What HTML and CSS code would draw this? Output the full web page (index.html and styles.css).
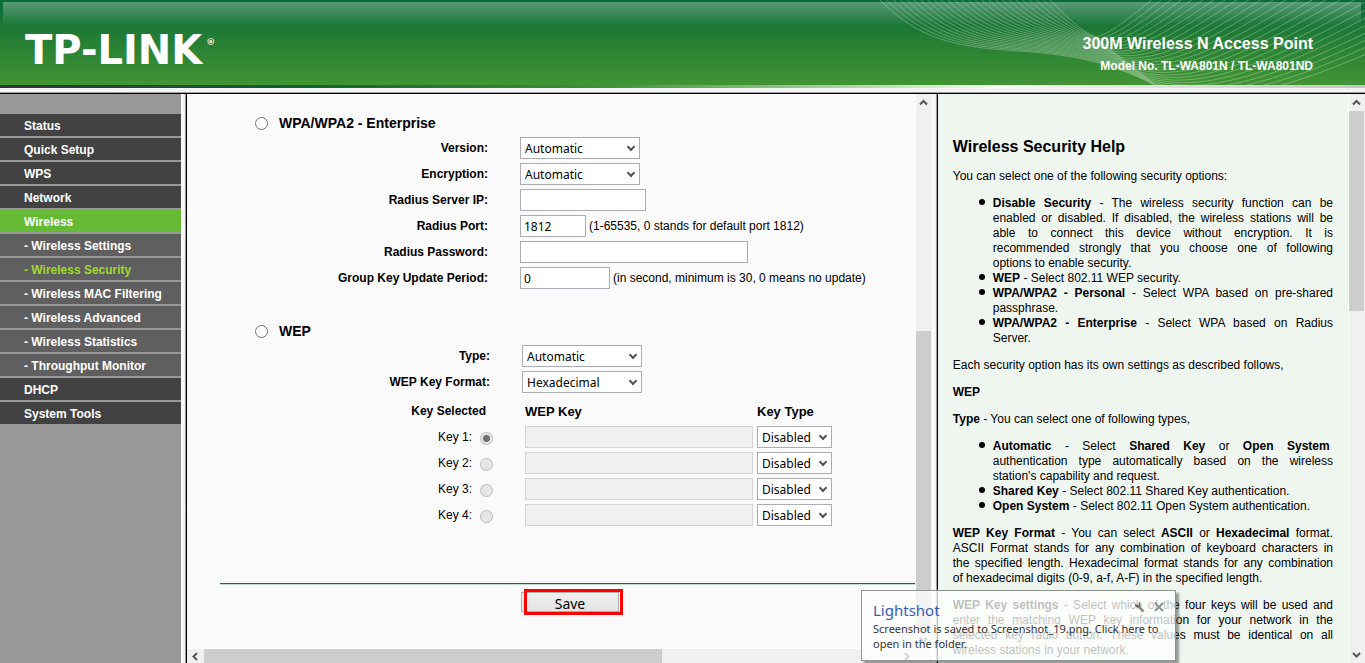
FILE: index.html
```html
<!DOCTYPE html>
<html lang="en">
<head>
  <meta charset="UTF-8" />
  <meta name="viewport" content="width=device-width, initial-scale=1.0"/>
  <title>TL-WA801N / TL-WA801ND</title>
  <link rel="stylesheet" href="styles.css">
</head>
<body>

  <header class="banner">
    <svg class="waves" id="waves" width="500" height="85" viewBox="865 0 500 85" aria-hidden="true"></svg>
    <div class="logo">TP-LINK<sup>®</sup></div>
    <div class="product">
      <h1>300M Wireless N Access Point</h1>
      <p>Model No. TL-WA801N / TL-WA801ND</p>
    </div>
  </header>
  <div class="banner-strip"></div>

  <div class="frames">
    <nav class="menu">
      <a href="#">Status</a>
      <a href="#">Quick Setup</a>
      <a href="#">WPS</a>
      <a href="#">Network</a>
      <a href="#" class="active">Wireless</a>
      <a href="#" class="sub">- Wireless Settings</a>
      <a href="#" class="sub current">- Wireless Security</a>
      <a href="#" class="sub">- Wireless MAC Filtering</a>
      <a href="#" class="sub">- Wireless Advanced</a>
      <a href="#" class="sub">- Wireless Statistics</a>
      <a href="#" class="sub">- Throughput Monitor</a>
      <a href="#">DHCP</a>
      <a href="#">System Tools</a>
    </nav>
    <div class="divider"></div>

    <main class="content">
      <div class="content-row">
        <form class="settings" onsubmit="return false">
          <section class="group">
            <h2 class="group-title">
              <input type="radio" name="security" id="enterprise">
              <label for="enterprise">WPA/WPA2 - Enterprise</label>
            </h2>
            <div class="row">
              <label for="version">Version:</label>
              <span class="drop"><select id="version" class="medium"><option>Automatic</option></select></span>
            </div>
            <div class="row">
              <label for="encryption">Encryption:</label>
              <span class="drop"><select id="encryption" class="medium"><option>Automatic</option></select></span>
            </div>
            <div class="row">
              <label for="radiusIp">Radius Server IP:</label>
              <input type="text" id="radiusIp" class="ip">
            </div>
            <div class="row">
              <label for="radiusPort">Radius Port:</label>
              <input type="text" id="radiusPort" class="port" value="1812">
              <span class="hint">(1-65535, 0 stands for default port 1812)</span>
            </div>
            <div class="row">
              <label for="radiusPwd">Radius Password:</label>
              <input type="password" id="radiusPwd" class="wide">
            </div>
            <div class="row">
              <label for="period">Group Key Update Period:</label>
              <input type="text" id="period" class="period" value="0">
              <span class="hint">(in second, minimum is 30, 0 means no update)</span>
            </div>
          </section>

          <section class="group wep">
            <h2 class="group-title">
              <input type="radio" name="security" id="wep">
              <label for="wep">WEP</label>
            </h2>
            <div class="row">
              <label for="type">Type:</label>
              <span class="drop"><select id="type" class="medium"><option>Automatic</option></select></span>
            </div>
            <div class="row">
              <label for="format">WEP Key Format:</label>
              <span class="drop"><select id="format" class="medium"><option>Hexadecimal</option></select></span>
            </div>

            <table class="keys">
              <tr>
                <th class="key-name">Key Selected</th>
                <th>WEP Key</th>
                <th>Key Type</th>
              </tr>
              <tr>
                <td class="key-name"><label for="key1">Key 1:</label><input type="radio" name="key" id="key1" checked disabled></td>
                <td><input type="text" class="wide" aria-label="WEP Key 1" disabled></td>
                <td><span class="drop"><select class="small" aria-label="Key Type 1"><option>Disabled</option></select></span></td>
              </tr>
              <tr>
                <td class="key-name"><label for="key2">Key 2:</label><input type="radio" name="key" id="key2" disabled></td>
                <td><input type="text" class="wide" aria-label="WEP Key 2" disabled></td>
                <td><span class="drop"><select class="small" aria-label="Key Type 2"><option>Disabled</option></select></span></td>
              </tr>
              <tr>
                <td class="key-name"><label for="key3">Key 3:</label><input type="radio" name="key" id="key3" disabled></td>
                <td><input type="text" class="wide" aria-label="WEP Key 3" disabled></td>
                <td><span class="drop"><select class="small" aria-label="Key Type 3"><option>Disabled</option></select></span></td>
              </tr>
              <tr>
                <td class="key-name"><label for="key4">Key 4:</label><input type="radio" name="key" id="key4" disabled></td>
                <td><input type="text" class="wide" aria-label="WEP Key 4" disabled></td>
                <td><span class="drop"><select class="small" aria-label="Key Type 4"><option>Disabled</option></select></span></td>
              </tr>
            </table>
          </section>

          <div class="actions">
            <button type="submit">Save</button>
          </div>
        </form>

        <div class="scroll main-scroll">
          <svg class="arrow" viewBox="0 0 15 17"><path d="M4 10.500 7.500 7l3.500 3.500"/></svg>
          <div class="track"><div class="thumb"></div></div>
          <svg class="arrow" viewBox="0 0 15 17"><path d="M4 7l3.500 3.500L11 7"/></svg>
        </div>
      </div>

      <div class="scroll-x">
        <svg class="arrow" viewBox="0 0 17 14"><path d="M10 4 6.500 7.500 10 11"/></svg>
        <div class="track"><div class="thumb"></div></div>
        <svg class="arrow" viewBox="0 0 17 14"><path d="M7 4l3.500 3.500L7 11"/></svg>
        <div class="corner"></div>
      </div>
    </main>
    <div class="divider"></div>

    <aside class="help">
      <div class="help-text">
        <h2>Wireless Security Help</h2>
        <p>You can select one of the following security options:</p>
        <ul>
          <li><b>Disable Security</b> - The wireless security function can be enabled or disabled. If disabled, the wireless stations will be able to connect this device without encryption. It is recommended strongly that you choose one of following options&nbsp;to enable security.</li>
          <li><b>WEP</b> - Select 802.11 WEP security.</li>
          <li><b>WPA/WPA2 - Personal</b> - Select WPA based on pre-shared passphrase.</li>
          <li><b>WPA/WPA2 - Enterprise</b> - Select WPA based on Radius Server.</li>
        </ul>
        <p>Each security option has its own settings as described follows,</p>
        <p><b>WEP</b></p>
        <p><b>Type</b> - You can select one of following types,</p>
        <ul>
          <li><b>Automatic</b> - Select <b>Shared Key</b> or <b>Open System</b>&nbsp; authentication type automatically based on the wireless station's capability and request.</li>
          <li><b>Shared Key</b> - Select 802.11 Shared Key authentication.</li>
          <li><b>Open System</b> - Select 802.11 Open System authentication.</li>
        </ul>
        <p><b>WEP Key Format</b> - You can select <b>ASCII</b> or <b>Hexadecimal</b> format. ASCII Format stands for any combination of keyboard characters in the&nbsp;specified length. Hexadecimal format stands for any combination of&nbsp;hexadecimal digits (0-9, a-f, A-F) in the specified length.</p>
        <p><b>WEP Key settings</b> - Select which of the four keys will be used and enter the matching WEP key information for your network in the selected key radio button. These values must be identical on all wireless stations in your network.</p>
      </div>
      <div class="scroll help-scroll">
        <svg class="arrow" viewBox="0 0 15 17"><path d="M4 10.500 7.500 7l3.500 3.500"/></svg>
        <div class="track"><div class="thumb"></div></div>
        <svg class="arrow" viewBox="0 0 15 17"><path d="M4 7l3.500 3.500L11 7"/></svg>
      </div>
    </aside>
  </div>

  <!-- Tray notification -->
  <div class="toast">
    <div class="toast-head">
      <h3>Lightshot</h3>
      <button type="button" aria-label="Settings">
        <svg width="10" height="11" viewBox="0 0 10 11"><path d="M3 4l5.500 5.500" stroke="#8a8e8a" stroke-width="2.500"/><path d="M0 1.500v2.500l2.500 2 3-1.500V2L4 0v2.500L2.500 3z" fill="#6c6c74"/></svg>
      </button>
      <button type="button" aria-label="Close">
        <svg width="10" height="10" viewBox="0 0 10 10"><path d="M1 1l8 8M9 1L1 9" stroke="#8a938a" stroke-width="2"/></svg>
      </button>
    </div>
    <p>Screenshot is saved to Screenshot_19.png. Click here to open in the folder.</p>
  </div>

  <script>
    // Fan of thin lines behind the product name
    const low = [880, 0, 960, 82, 1040, 22, 1160, 88, 1230, 110, 1300, 85, 1420, 30];
    const high = [1050, 0, 1068, 18, 1082, 32, 1096, 37, 1120, 30, 1140, 8, 1260, -90];
    const count = 26;
    let lines = '';

    for (let i = 0; i < count; i++) {
      const t = i / (count - 1);
      const p = low.map((v, n) => (v + (high[n] - v) * t).toFixed(1));
      lines += `<path d="M${p[0]} ${p[1]}C${p.slice(2).join(' ')}"/>`;
    }

    document.getElementById('waves').innerHTML = lines;
  </script>

</body>
</html>
```
FILE: styles.css
```css
* { box-sizing: border-box; }

body {
  margin: 0;
  height: 100vh;
  display: flex;
  flex-direction: column;
  overflow: hidden;
  position: relative;
  font-family: Arial, "Liberation Sans", sans-serif;
  font-size: 12px;
  line-height: 15px;
  color: #000;
  background: #fafafa;
}

h1, h2, h3, p { margin: 0; }

/* Banner */
.banner {
  position: relative;
  flex: none;
  height: 85px;
  display: flex;
  justify-content: space-between;
  padding: 0 52px 0 25px;
  color: #fff;
  background: linear-gradient(#086b37 0, #1b7735 26px, #429533 85px);
}

.banner::before {
  content: "";
  position: absolute;
  left: 3px;
  right: 4px;
  top: 2px;
  height: 24px;
  background: linear-gradient(rgba(255,255,255,0.32), rgba(255,255,255,0));
}

.waves {
  position: absolute;
  right: 0;
  top: 0;
  fill: none;
  stroke: #fff;
  stroke-opacity: 0.28;
}

.logo {
  position: relative;
  display: flex;
  gap: 4px;
  padding-top: 30px;
  font: bold 40px/40px "DejaVu Sans", sans-serif;
}

.logo sup {
  font-size: 9px;
  line-height: 24px;
}

.product {
  position: relative;
  padding-top: 34px;
  text-align: right;
  font-weight: bold;
}

.product h1 {
  font-size: 16px;
  line-height: 20px;
}

.product p {
  margin-top: 4px;
  line-height: 16px;
}

.banner-strip {
  flex: none;
  height: 9px;
  background:
    linear-gradient(90deg, #333 0, #106038 22%, #3f9436 45%, #f4fbf0 73%, #c4c4c4 100%) top / 100% 3px no-repeat,
    linear-gradient(#f4f4f4 7px, #a0a0a0 7px, #a0a0a0 8px, #000 8px);
}

/* Frames */
.frames {
  flex: 1;
  display: flex;
  min-height: 0;
}

.divider {
  flex: none;
  width: 6px;
  background: linear-gradient(90deg, #fff 0, #f0f0f0 4px, #a0a0a0 4px, #a0a0a0 5px, #000 5px);
}

/* Menu */
.menu {
  flex: none;
  width: 181px;
  padding-top: 20px;
  background: #989898;
}

.menu a {
  display: block;
  height: 22px;
  margin-bottom: 2px;
  padding-left: 24px;
  font-weight: bold;
  line-height: 24px;
  color: #fff;
  text-decoration: none;
  background: #424242;
}

.menu .active { background: #65ba33; }
.menu .sub { background: #5f5f5f; }
.menu .current { color: #a2d82e; }

/* Settings */
.content {
  flex: 1;
  display: flex;
  flex-direction: column;
  min-width: 0;
}

.content-row {
  flex: 1;
  display: flex;
  min-height: 0;
}

.settings {
  flex: 1;
  min-width: 0;
  padding-top: 19px;
  overflow: hidden;
}

.group { margin-bottom: 30px; }

.group-title {
  display: flex;
  align-items: center;
  gap: 11px;
  height: 22px;
  padding: 0 0 2px 68px;
  font-size: 14px;
  line-height: 20px;
}

.group-title input { margin-top: 7px; }

.row {
  display: flex;
  align-items: center;
  height: 26px;
}

.row label {
  width: 301px;
  margin-right: 32px;
  text-align: right;
  font-weight: bold;
}

.wep .row label { width: 303px; }

.hint { margin-left: 3px; }

input[type="text"],
input[type="password"],
select {
  display: block;
  height: 22px;
  margin: 0;
  padding: 0 4px;
  border: 1px solid #abadb3;
  border-radius: 0;
  font: 12px "Noto Sans", sans-serif;
  color: #000;
  background: #fff;
}

input[type="text"] { padding: 0 3px; }

input[type="text"]:disabled {
  border-color: #d5d5d5;
  background: #f0f0f0;
}

select {
  appearance: none;
  width: 100%;
}

.drop {
  position: relative;
  display: inline-block;
  vertical-align: top;
}

.drop::after {
  content: "";
  position: absolute;
  right: 6px;
  top: 7px;
  width: 4px;
  height: 4px;
  border: solid #555;
  border-width: 0 2px 2px 0;
  transform: rotate(45deg);
  pointer-events: none;
}

.medium { min-width: 120px; }
.small { min-width: 75px; }
.ip { width: 126px; }
.port { width: 66px; }
.period { width: 90px; }
.wide { width: 228px; }

input[type="radio"] {
  appearance: none;
  flex: none;
  width: 13px;
  height: 13px;
  margin: 0;
  border: 1px solid #707070;
  border-radius: 50%;
  background: #fff;
}

input[type="radio"]:disabled {
  border-color: #bcbcbc;
  background: #e6e6e6;
}

input[type="radio"]:checked {
  background: radial-gradient(circle, #707070 3px, #e6e6e6 4px);
}

.keys {
  border-collapse: collapse;
}

.keys th {
  height: 29px;
  padding: 4px 0 0;
  text-align: left;
  font-size: 13px;
}

.keys td {
  height: 26px;
  padding: 0 4px 0 0;
}

.keys .key-name {
  width: 338px;
  padding-right: 32px;
  text-align: right;
}

.keys th.key-name {
  padding-right: 39px;
  font-size: 12px;
}

.keys label { margin-right: 8px; }
.keys input[type="radio"] { vertical-align: -4px; }

.wep { margin-bottom: 0; }

.actions {
  margin: 55px 0 0 33px;
  padding: 8px 0 0 301px;
  border-top: 1px solid #18703c;
  box-shadow: inset 0 1px #c5dccd;
}

.actions button {
  position: relative;
  display: block;
  width: 98px;
  height: 20px;
  padding: 2px 0 0;
  border: 1px solid #acacac;
  font: 14px/18px "Noto Sans", sans-serif;
  background: linear-gradient(#f0f0f0, #e3e3e3);
}

.actions button::after {
  content: "";
  position: absolute;
  left: 2px;
  right: -5px;
  top: -4px;
  bottom: -4px;
  border: 3px solid #f00;
}

/* Scroll bars */
.scroll {
  flex: none;
  display: flex;
  flex-direction: column;
  background: #f0f0f0;
}

.arrow {
  flex: none;
  display: block;
  fill: none;
  stroke: #555;
  stroke-width: 2;
}

.scroll .arrow {
  width: 15px;
  height: 17px;
}

.track {
  flex: 1;
  display: flex;
}

.thumb { background: #cdcdcd; }

.scroll .track { flex-direction: column; }
.scroll .thumb { width: 15px; }

.main-scroll {
  width: 17px;
  border-left: 1px solid #fff;
}

.main-scroll .track { justify-content: flex-end; }
.main-scroll .thumb { height: 300px; }

.scroll-x {
  flex: none;
  display: flex;
  height: 15px;
  border-top: 1px solid #fff;
  background: #f0f0f0;
}

.scroll-x .arrow {
  width: 17px;
  height: 14px;
}

.scroll-x .thumb { width: 66%; }
.scroll-x .corner { width: 17px; }

/* Help */
.help {
  flex: none;
  display: flex;
  width: 31.3%;
  background: #eff6f0;
}

.help-text {
  flex: 1;
  padding: 44px 15px 0;
  text-align: justify;
  overflow: hidden;
}

.help h2 {
  margin-bottom: 13px;
  font-size: 16px;
  line-height: 18px;
}

.help p,
.help ul {
  margin: 0 0 12px;
}

.help ul {
  padding-left: 40px;
  list-style: none;
}

.help li::before {
  content: "";
  display: inline-block;
  width: 6px;
  height: 6px;
  margin: 0 8px 0 -14px;
  border-radius: 50%;
  vertical-align: 2px;
  background: #000;
}

.help-scroll {
  width: 17px;
  border-left: 1px solid #fff;
}

.help-scroll .thumb { height: 200px; }

/* Notification */
.toast {
  position: absolute;
  right: 189px;
  bottom: 2px;
  width: 315px;
  height: 71px;
  padding: 9px 11px;
  border: 1px solid #8e938e;
  box-shadow: 3px 3px 2px rgba(60,70,60,0.5);
  font: 11px/15px "Noto Sans", sans-serif;
  color: #333;
  background: rgba(255,255,255,0.75);
}

.toast-head {
  display: flex;
  align-items: flex-start;
  gap: 9px;
}

.toast h3 {
  flex: 1;
  font-size: 15px;
  font-weight: normal;
  line-height: 21px;
  color: #335cb4;
}

.toast button {
  display: flex;
  margin-top: 2px;
  padding: 0;
  border: none;
  background: none;
}
```
